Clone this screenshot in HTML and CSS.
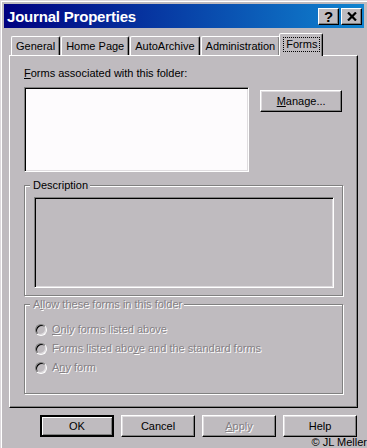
FILE: index.html
```html
<!DOCTYPE html>
<html>
<head>
<meta charset="utf-8">
<link rel="stylesheet" href="styles.css">
</head>
<body>
<div class="window">
  <div class="titlebar">
    <span class="title">Journal Properties</span>
    <div class="tbtns">
      <span class="tbtn help">?</span>
      <span class="tbtn close"><svg width="10" height="9" viewBox="0 0 10 9"><path d="M1 0.5 L9 8.5 M9 0.5 L1 8.5" stroke="#000" stroke-width="2.2" fill="none"/></svg></span>
    </div>
  </div>
  <div class="tabs">
    <span class="tab">General</span>
    <span class="tab">Home Page</span>
    <span class="tab">AutoArchive</span>
    <span class="tab">Administration</span>
    <span class="tab active"><span class="focus">Forms</span></span>
  </div>
  <div class="panel">
    <div class="label"><u>F</u>orms associated with this folder:</div>
    <div class="row">
      <div class="listbox"></div>
      <button class="btn manage"><u>M</u>anage...</button>
    </div>
    <div class="group desc">
      <span class="legend">Description</span>
      <div class="descbox"></div>
    </div>
    <div class="group allow">
      <span class="legend disabled">A<u>l</u>low these forms in this folder</span>
      <div class="radios">
        <div class="radio"><span class="circle"></span><span class="disabled"><u>O</u>nly forms listed above</span></div>
        <div class="radio"><span class="circle"></span><span class="disabled">Forms listed abo<u>v</u>e and the standard forms</span></div>
        <div class="radio"><span class="circle"></span><span class="disabled">A<u>n</u>y form</span></div>
      </div>
    </div>
  </div>
  <div class="buttons">
    <button class="btn default">OK</button>
    <button class="btn">Cancel</button>
    <button class="btn"><span class="disabled"><u>A</u>pply</span></button>
    <button class="btn">Help</button>
  </div>
  <span class="copyright">© JL Meller</span>
</div>
</body>
</html>
```

FILE: styles.css
```css
* { box-sizing: border-box; }
html, body { margin: 0; padding: 0; }
body {
  width: 367px;
  height: 448px;
  overflow: hidden;
  background: #bfbbbf;
  font-family: "Liberation Sans", Arial, sans-serif;
  font-size: 11px;
  color: #000;
}
.window {
  position: relative;
  width: 367px;
  height: 448px;
  border-top: 1px solid #dcd8dc;
  border-left: 1px solid #dcd8dc;
  box-shadow: inset 1px 1px 0 #fff;
  padding: 3px 3px 0 3px;
  display: flex;
  flex-direction: column;
}
.titlebar {
  height: 24px;
  background: linear-gradient(to right, #000080, #1084d0);
  display: flex;
  align-items: center;
  justify-content: space-between;
  padding: 0 2px 0 3px;
}
.title {
  color: #fff;
  font-weight: bold;
  font-size: 15px;
  letter-spacing: -0.2px;
}
.tbtns { display: flex; gap: 2px; }
.tbtn {
  width: 21px;
  height: 17px;
  background: #bfbbbf;
  border: 1px solid;
  border-color: #fff #000 #000 #fff;
  box-shadow: inset -1px -1px 0 #808080;
  display: flex;
  align-items: center;
  justify-content: center;
  font-weight: bold;
  font-size: 15px;
  line-height: 1;
}
.tabs {
  display: flex;
  align-items: flex-end;
  height: 25px;
  padding-left: 7px;
  margin-top: 2px;
}
.tab {
  height: 19px;
  padding: 0 4px;
  border: 1px solid;
  border-bottom: none;
  border-color: #fff #000 transparent #fff;
  box-shadow: inset -1px 0 0 #808080;
  border-radius: 2px 2px 0 0;
  display: flex;
  align-items: center;
  margin-right: 1px;
}
.tab.active {
  height: 23px;
  padding: 0 3px 2px 4px;
  margin-left: -2px;
  margin-right: 0;
  position: relative;
  z-index: 1;
  margin-bottom: -1px;
  background: #bfbbbf;
}
.focus {
  outline: 1px dotted #000;
  outline-offset: 0;
  padding: 0 2px;
  line-height: 13px;
}
.panel {
  width: 349px;
  height: 353px;
  margin-left: 5px;
  border: 1px solid;
  border-color: #fff #000 #000 #fff;
  box-shadow: inset -1px -1px 0 #808080;
  padding: 11px 15px 0 14px;
  display: flex;
  flex-direction: column;
}
.label { line-height: 13px; }
.row {
  display: flex;
  align-items: flex-start;
  margin-top: 7px;
}
.listbox {
  width: 226px;
  height: 85px;
  background: #fdfbfd;
  border: 1px solid;
  border-color: #808080 #fff #fff #808080;
  box-shadow: inset 1px 1px 0 #000, inset -1px -1px 0 #dfdcdf;
}
.btn {
  font-family: "Liberation Sans", Arial, sans-serif;
  font-size: 11px;
  color: #000;
  background: #bfbbbf;
  width: 74px;
  height: 22px;
  padding: 0;
  border: 1px solid;
  border-color: #fff #000 #000 #fff;
  box-shadow: inset -1px -1px 0 #808080, inset 1px 1px 0 #dfdcdf;
}
.btn.manage {
  width: 82px;
  margin-left: 11px;
  margin-top: 3px;
}
.btn.default {
  border-width: 2px;
  border-color: #000;
  box-shadow: inset 1px 1px 0 #fff, inset -1px -1px 0 #808080;
}
.group {
  border: 1px solid #808080;
  box-shadow: inset 1px 1px 0 #fff, 1px 1px 0 #fff;
  display: flex;
  flex-direction: column;
  align-items: flex-start;
  width: 319px;
}
.legend {
  background: #bfbbbf;
  line-height: 13px;
  margin: -7px 0 0 5px;
  padding: 0 2px 0 3px;
}
.desc {
  margin-top: 13px;
  height: 111px;
}
.descbox {
  margin: 5px 0 0 9px;
  width: 300px;
  height: 91px;
  border: 1px solid;
  border-color: #808080 #fff #fff #808080;
  box-shadow: inset 1px 1px 0 #000, inset -1px -1px 0 #dfdcdf;
}
.allow {
  margin-top: 8px;
  height: 90px;
}
.disabled {
  color: #858185;
  text-shadow: 1px 1px 0 #fff;
}
.radios {
  display: flex;
  flex-direction: column;
  gap: 6px;
  margin: 12px 0 0 10px;
}
.radio {
  display: flex;
  align-items: center;
  gap: 5px;
  line-height: 13px;
}
.circle {
  width: 12px;
  height: 12px;
  border-radius: 50%;
  border: 1px solid;
  border-color: #808080 #fff #fff #808080;
  box-shadow: inset 1px 1px 0 #000, inset -1px -1px 0 #dfdcdf;
  background: #bfbbbf;
  margin-top: 1px;
}
.buttons {
  display: flex;
  justify-content: flex-end;
  gap: 7px;
  margin-top: 7px;
  padding-right: 7px;
}
.copyright {
  position: absolute;
  right: 0;
  bottom: 0;
  font-size: 11px;
  line-height: 11px;
  padding-left: 2px;
}
```
